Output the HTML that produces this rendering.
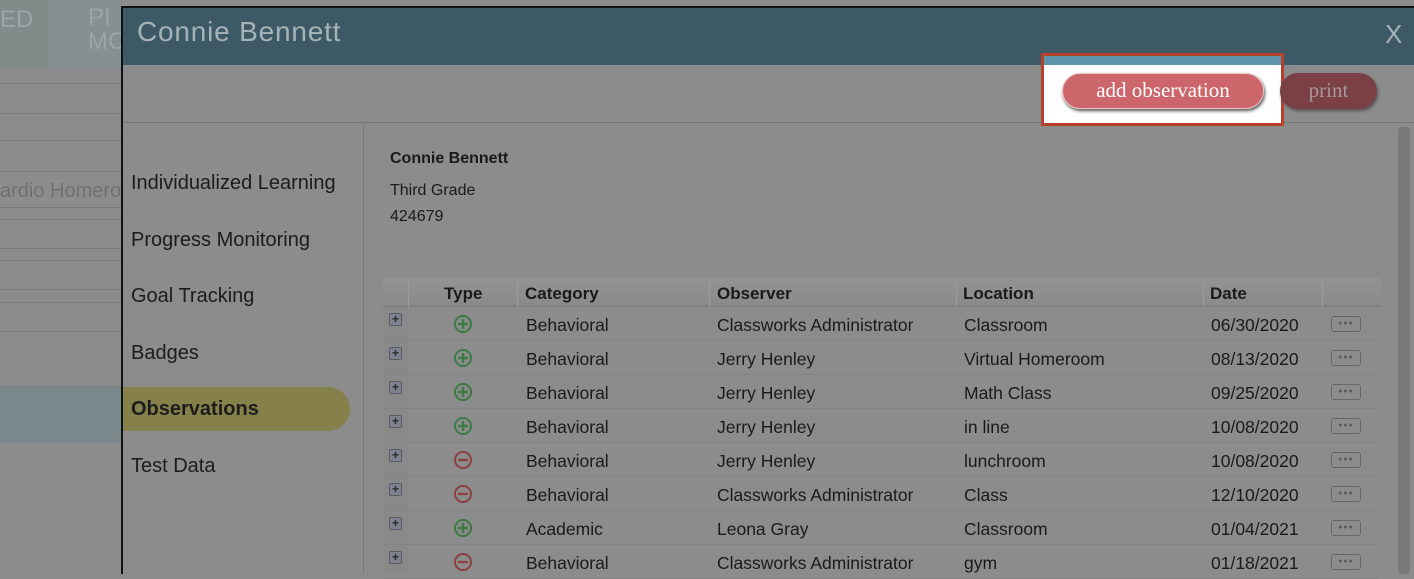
<!DOCTYPE html>
<html><head><meta charset="utf-8"><style>
*{margin:0;padding:0;box-sizing:border-box}
body{width:1414px;height:574px;overflow:hidden;background:#8c8c8c;font-family:"Liberation Sans",sans-serif;position:relative;color:#1a1a1a}
.a{position:absolute}
.hl{position:absolute;left:0;width:121px;height:1px;background:#7a7a7a}
.side{position:absolute;left:131px;font-size:20px;color:#1c1c1c}
.row{position:absolute;left:383px;width:995px;height:34px;border-bottom:1px solid #848484;font-size:17.5px}
.row span{position:absolute;top:8px}
.exp{position:absolute;left:6px;top:6px;width:13px;height:13px;border:1px solid #5a5a60;background:#7f8090;border-radius:2px;font-size:12px;line-height:10px;text-align:center;color:#2a2a2a;font-weight:bold}
.dots{position:absolute;left:948px;top:9px;width:30px;height:16px;border:1.5px solid #666;border-radius:3px;font-size:7px;line-height:13px;text-align:center;color:#5a5a5a;letter-spacing:1px}
</style></head><body>
<div class="a" style="left:0;top:0;width:121px;height:70px;background:#838a8a"></div>
<div class="a" style="left:48px;top:0;width:73px;height:70px;background:#869090"></div>
<div class="a" style="left:0;top:6px;font-size:24px;color:#9aa5a5">ED</div>
<div class="a" style="left:88px;top:6px;font-size:24px;color:#9aa5a5;line-height:24px">PI<br>MC</div>
<div class="hl" style="top:83px"></div><div class="hl" style="top:113px"></div><div class="hl" style="top:127px;background:#888"></div><div class="hl" style="top:140px"></div><div class="hl" style="top:171px"></div>
<div class="a" style="left:0;top:180px;font-size:20px;color:#707070">ardio Homero</div>
<div class="hl" style="top:207px"></div><div class="hl" style="top:219px"></div><div class="hl" style="top:248px"></div><div class="hl" style="top:260px"></div><div class="hl" style="top:289px"></div><div class="hl" style="top:302px"></div><div class="hl" style="top:331px"></div>
<div class="a" style="left:0;top:385px;width:121px;height:58px;background:#7a878b"></div>
<div class="a" style="left:121px;top:6px;width:1293px;height:568px;border-left:2px solid #111;border-top:2px solid #111"></div>
<div class="a" style="left:123px;top:8px;width:1291px;height:57px;background:#3d5966"></div>
<div class="a" style="left:137px;top:16px;font-size:28px;color:#a5b3b8;letter-spacing:0.8px">Connie Bennett</div>
<div class="a" style="left:1385px;top:19px;font-size:26px;color:#a5b3b8">X</div>
<div class="a" style="left:123px;top:122px;width:1291px;height:1px;background:#777"></div>
<div class="a" style="left:363px;top:123px;width:1px;height:451px;background:#7a7a7a"></div>
<div class="a" style="left:1041px;top:53px;width:243px;height:73px;border:3px solid #b5412a;background:#fff"></div>
<div class="a" style="left:1044px;top:56px;width:237px;height:9px;background:#5e94ac"></div>
<div class="a" style="left:1062px;top:73px;width:202px;height:36px;border-radius:18px;background:#cc666b;border:1px solid #e8c8c8;box-shadow:1px 2px 3px #555;color:#fff;font-family:'Liberation Serif',serif;font-size:21px;text-align:center;line-height:33px">add observation</div>
<div class="a" style="left:1280px;top:73px;width:97px;height:36px;border-radius:18px;background:#7a4046;box-shadow:1px 2px 3px #555;color:#a89898;font-family:'Liberation Serif',serif;font-size:21px;text-align:center;line-height:34px">print</div>
<div class="a" style="left:1398px;top:127px;width:12px;height:447px;background:#7a7a7a;border-radius:4px"></div>
<div class="side" style="top:172px">Individualized Learning</div>
<div class="side" style="top:229px">Progress Monitoring</div>
<div class="side" style="top:285px">Goal Tracking</div>
<div class="side" style="top:342px">Badges</div>
<div class="a" style="left:123px;top:387px;width:227px;height:44px;background:#86814a;border-radius:0 22px 22px 0"></div>
<div class="side" style="top:398px;font-weight:bold">Observations</div>
<div class="side" style="top:455px">Test Data</div>
<div class="a" style="left:390px;top:150px;font-size:16px;font-weight:bold">Connie Bennett</div>
<div class="a" style="left:390px;top:182px;font-size:16px">Third Grade</div>
<div class="a" style="left:390px;top:208px;font-size:16px">424679</div>
<div class="a" style="left:383px;top:278px;width:998px;height:29px;background:linear-gradient(#939393,#8a8a8a);border-bottom:1px solid #7c7c7c;font-size:17px;font-weight:bold">
<div class="a" style="left:25px;top:0;width:1px;height:29px;background:#9a9a9a"></div>
<span class="a" style="left:61px;top:6px">Type</span>
<div class="a" style="left:134px;top:0;width:1px;height:29px;background:#9a9a9a"></div>
<span class="a" style="left:142px;top:6px">Category</span>
<div class="a" style="left:326px;top:0;width:1px;height:29px;background:#9a9a9a"></div>
<span class="a" style="left:334px;top:6px">Observer</span>
<div class="a" style="left:573px;top:0;width:1px;height:29px;background:#9a9a9a"></div>
<span class="a" style="left:580px;top:6px">Location</span>
<div class="a" style="left:820px;top:0;width:1px;height:29px;background:#9a9a9a"></div>
<span class="a" style="left:827px;top:6px">Date</span>
<div class="a" style="left:939px;top:0;width:1px;height:29px;background:#9a9a9a"></div>
</div>
<div class="a" style="left:383px;top:307px;width:25px;height:267px;background:#898989"></div>
<div id="rows"></div>
<script>
var d=[["p","Behavioral","Classworks Administrator","Classroom","06/30/2020"],["p","Behavioral","Jerry Henley","Virtual Homeroom","08/13/2020"],["p","Behavioral","Jerry Henley","Math Class","09/25/2020"],["p","Behavioral","Jerry Henley","in line","10/08/2020"],["m","Behavioral","Jerry Henley","lunchroom","10/08/2020"],["m","Behavioral","Classworks Administrator","Class","12/10/2020"],["p","Academic","Leona Gray","Classroom","01/04/2021"],["m","Behavioral","Classworks Administrator","gym","01/18/2021"]];
var h="";d.forEach(function(r,i){var c=r[0]=="p"?"#3d7a45":"#8e3f3f";
var ic='<svg class="a" style="left:70px;top:7px" width="20" height="20" viewBox="0 0 20 20"><circle cx="10" cy="10" r="8" fill="none" stroke="'+c+'" stroke-width="2"/><path d="M5 10H15'+(r[0]=="p"?'M10 5V15':'')+'" stroke="'+c+'" stroke-width="2.4"/></svg>';
h+='<div class="row" style="top:'+(307+34*i)+'px"><div class="exp">+</div>'+ic+'<span style="left:143px">'+r[1]+'</span><span style="left:334px">'+r[2]+'</span><span style="left:581px">'+r[3]+'</span><span style="left:828px">'+r[4]+'</span><div class="dots">●●●</div></div>';});
document.getElementById("rows").innerHTML=h;
</script>
</body></html>
